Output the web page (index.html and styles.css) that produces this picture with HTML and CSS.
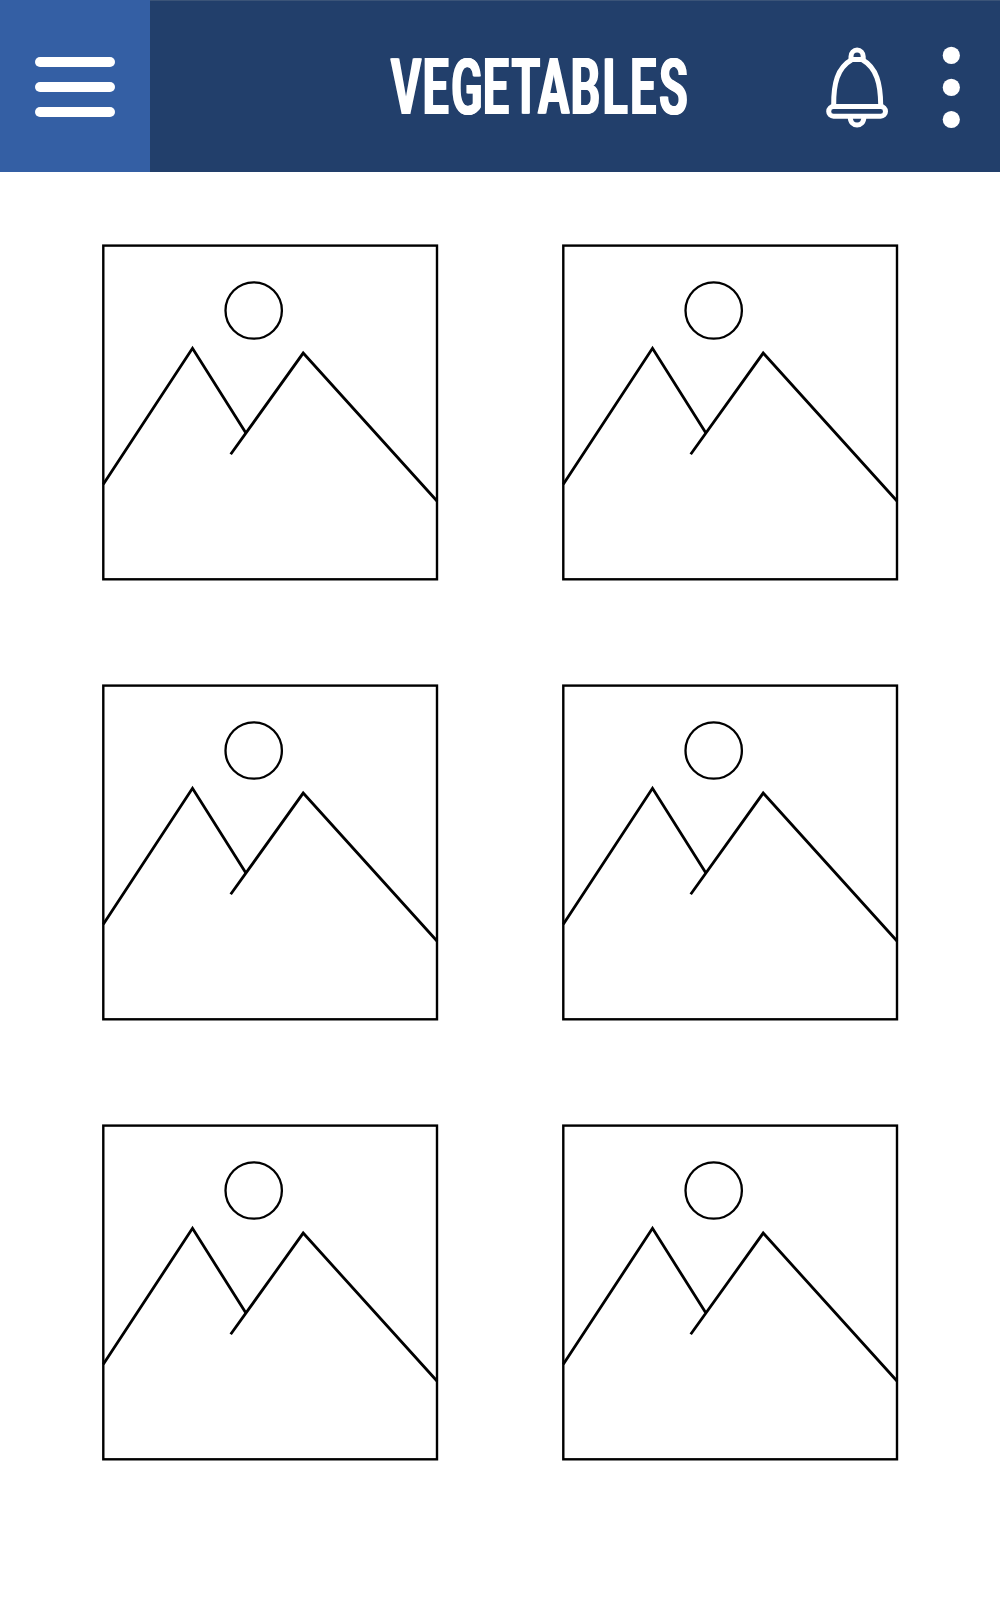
FILE: index.html
```html
<!DOCTYPE html>
<html lang="en">
<head>
<meta charset="utf-8">
<title>Vegetables</title>
<link rel="stylesheet" href="styles.css">
</head>
<body>
<svg class="defs" aria-hidden="true">
  <symbol id="picture" viewBox="0 0 338 339">
    <rect x="2.3" y="2.6" width="333.7" height="333.7" stroke-width="2.4"/>
    <circle cx="152.7" cy="67.5" r="28.2" stroke-width="2.3"/>
    <path d="M2.3 241.3 91.5 105.3 144.9 190.1M129.7 211.3 202.2 110.1 336.2 258.2" stroke-width="2.8"/>
  </symbol>
</svg>
<header class="bar">
  <button class="menu" aria-label="Menu"><span></span><span></span><span></span></button>
  <h1 class="title">
    <svg width="350" height="120" viewBox="365 26 350 120">
      <text transform="scale(.6 1)" y="114" x="651.2 704 751.5 804.5 852.3 896.7 950.7 1004.3 1050 1098.3">VEGETABLES</text>
    </svg>
  </h1>
  <div class="actions">
    <button class="icon" aria-label="Notifications">
      <svg width="66" height="86" viewBox="824 44 66 86" fill="none" stroke="#fff" stroke-width="5">
        <rect x="828.7" y="106.6" width="56.8" height="9.6" rx="4.8"/>
        <path d="M833.7 105C833.5 84 837 68 852 59.5H862C877 68 880.5 84 880.7 105"/>
        <path d="M851 60V56.5A6.1 6.5 0 0 1 863.2 56.5V60"/>
        <path d="M850.2 117C850.2 127.8 863.9 127.8 863.9 117"/>
      </svg>
    </button>
    <button class="icon" aria-label="More options">
      <svg width="18" height="86" viewBox="942 44 18 86" fill="#fff">
        <circle cx="951.3" cy="55.4" r="8.6"/><circle cx="951.3" cy="87.4" r="8.6"/><circle cx="951.3" cy="119.5" r="8.6"/>
      </svg>
    </button>
  </div>
</header>
<main class="gallery">
  <svg class="picture"><use href="#picture"/></svg>
  <svg class="picture"><use href="#picture"/></svg>
  <svg class="picture"><use href="#picture"/></svg>
  <svg class="picture"><use href="#picture"/></svg>
  <svg class="picture"><use href="#picture"/></svg>
  <svg class="picture"><use href="#picture"/></svg>
</main>
</body>
</html>
```
FILE: styles.css
```css
* { box-sizing: border-box; }
body { margin: 0; min-height: 1600px; background: #fff; font-family: Roboto, sans-serif; }
button { margin: 0; padding: 0; border: 0; background: none; }
svg { display: block; }
.defs { display: none; }

.bar {
  display: grid;
  grid-template-columns: 150px 215px 350px 1fr;
  height: 172px;
  background: linear-gradient(#3b5478 1px, #223f6b 1px);
}
.menu {
  display: flex;
  flex-direction: column;
  align-items: center;
  justify-content: center;
  gap: 14.8px;
  padding-top: 2px;
  background: #345fa4;
}
.menu span { width: 80px; height: 10.4px; border-radius: 6px; background: #fff; }
.title { grid-column: 3; margin: 26px 0 0; font-size: 78px; }
.title svg { overflow: visible; }
.title text {
  font: 700 78px Roboto, sans-serif;
  fill: #fff;
  text-shadow: 1px 0 #fff, -1px 0 #fff;
}
.actions {
  display: flex;
  align-items: flex-start;
  justify-content: space-between;
  padding: 44px 40px 0 109px;
}

.gallery {
  display: grid;
  grid-template-columns: repeat(2, 338px);
  grid-auto-rows: 339px;
  gap: 101px 122px;
  padding: 71px 101px 0;
}
.picture { width: 338px; height: 339px; fill: none; stroke: #000; }
```
